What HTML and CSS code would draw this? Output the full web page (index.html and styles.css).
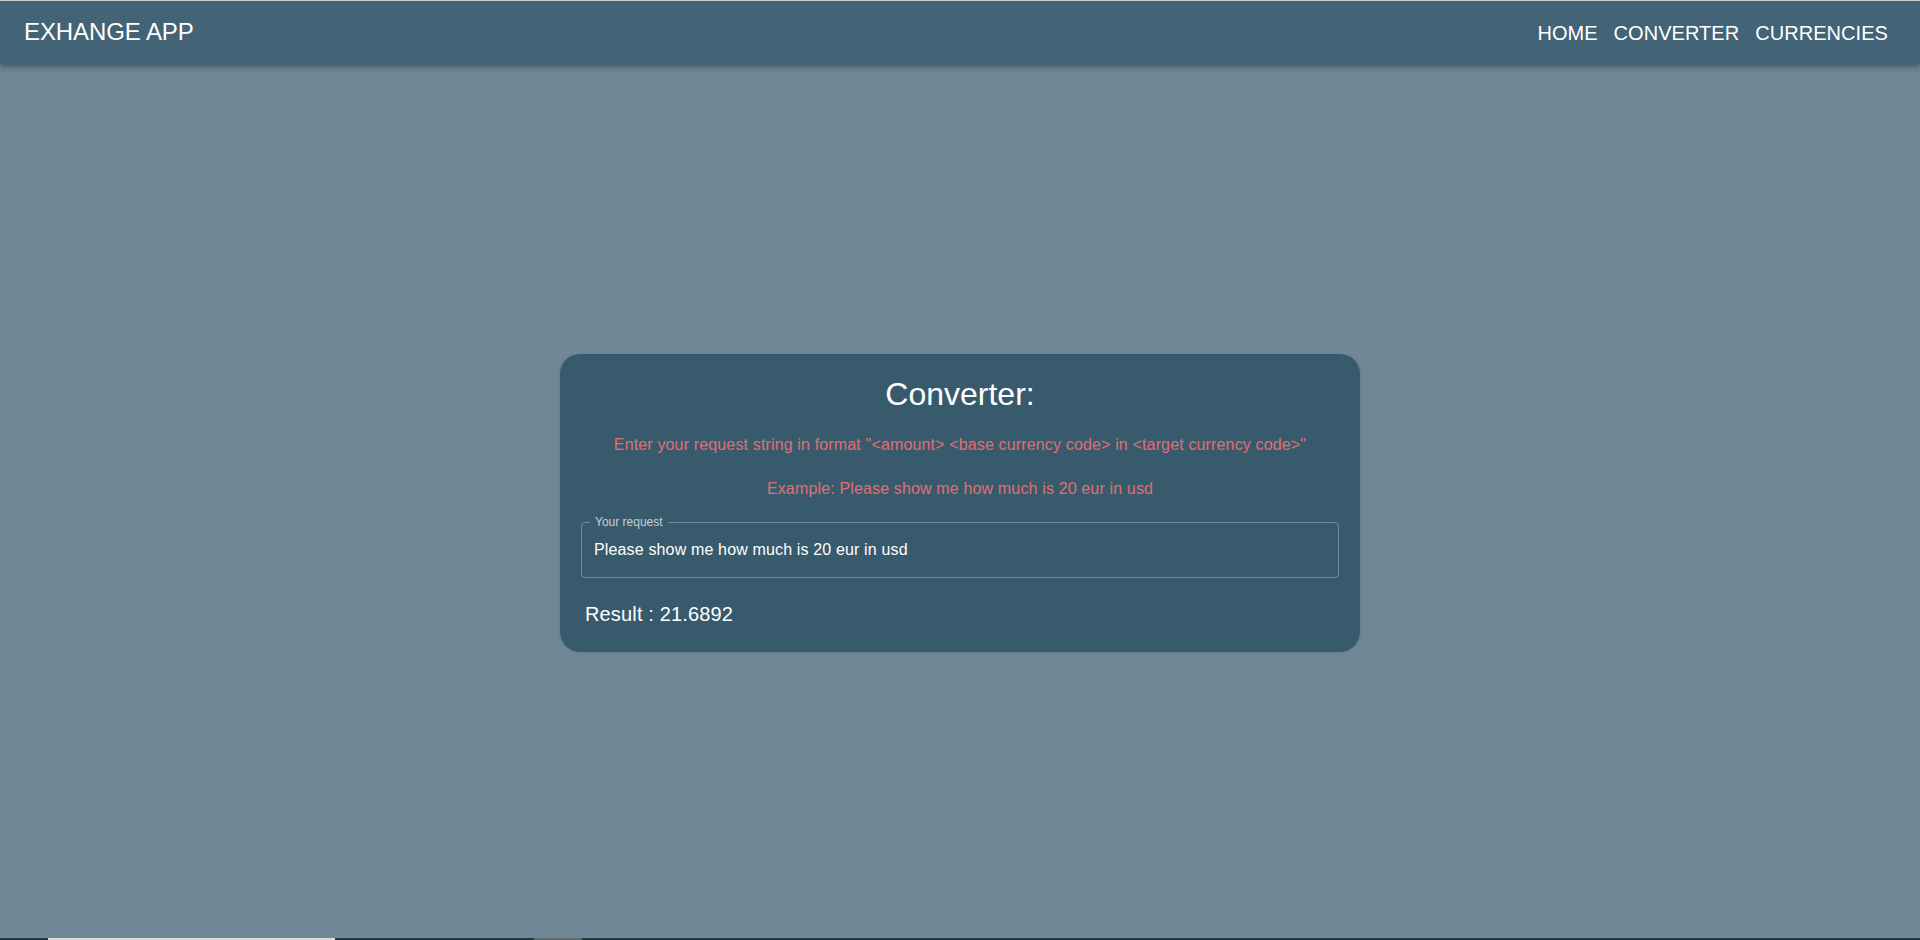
FILE: index.html
```html
<!DOCTYPE html>
<html lang="en">
<head>
<meta charset="utf-8">
<title>Exhange App</title>
<link rel="stylesheet" href="styles.css">
</head>
<body>
<div class="page">
  <header class="appbar">
    <div class="brand">EXHANGE APP</div>
    <nav class="nav">
      <a class="nav-link" href="#">HOME</a>
      <a class="nav-link" href="#">CONVERTER</a>
      <a class="nav-link" href="#">CURRENCIES</a>
    </nav>
  </header>
  <main class="main">
    <section class="card">
      <h1 class="card-title">Converter:</h1>
      <p class="hint">Enter your request string in format "&lt;amount&gt; &lt;base currency code&gt; in &lt;target currency code&gt;"</p>
      <p class="hint">Example: Please show me how much is 20 eur in usd</p>
      <div class="field">
        <label class="field-label" for="req">Your request</label>
        <input class="field-input" id="req" type="text" value="Please show me how much is 20 eur in usd">
        <fieldset class="field-outline"><legend class="field-legend"><span>Your request</span></legend></fieldset>
      </div>
      <div class="result">Result : 21.6892</div>
    </section>
  </main>
</div>
<div class="taskbar">
  <span class="taskbar-light"></span>
  <span class="taskbar-gray"></span>
</div>
</body>
</html>
```

FILE: styles.css
```css
* { box-sizing: border-box; }

html, body {
  margin: 0;
  padding: 0;
  height: 100%;
}

body {
  background: #708796;
  font-family: "Liberation Sans", Arial, sans-serif;
  color: #ffffff;
  overflow: hidden;
}

.page {
  min-height: 100vh;
  display: flex;
  flex-direction: column;
}

.appbar {
  height: 64px;
  flex: 0 0 64px;
  background: #436377;
  display: flex;
  align-items: center;
  justify-content: space-between;
  padding: 0 32px 0 24px;
  box-shadow: inset 0 1px 0 #c9cdd0, 0 2px 4px -1px rgba(0,0,0,0.2), 0 4px 5px 0 rgba(0,0,0,0.14), 0 1px 10px 0 rgba(0,0,0,0.12);
  position: relative;
  z-index: 2;
}

.brand {
  font-size: 24px;
  line-height: 1;
  letter-spacing: -0.1px;
}

.nav {
  display: flex;
  gap: 16px;
  padding-top: 2px;
}

.nav-link {
  color: #ffffff;
  text-decoration: none;
  font-size: 20px;
  line-height: 1;
  letter-spacing: 0.05px;
}

.main {
  flex: 1;
  display: flex;
  align-items: center;
  justify-content: center;
}

.card {
  width: 800px;
  background: #385a6d;
  border-radius: 20px;
  padding: 22px 21px 21px 21px;
  box-shadow: 0 2px 1px -1px rgba(0,0,0,0.2), 0 1px 1px 0 rgba(0,0,0,0.14), 0 1px 3px 0 rgba(0,0,0,0.12);
  display: flex;
  flex-direction: column;
}

.card-title {
  margin: 0;
  font-size: 32px;
  line-height: 37px;
  font-weight: 400;
  text-align: center;
}

.hint {
  margin: 20px 0 0 0;
  font-size: 16px;
  line-height: 24px;
  letter-spacing: 0.15px;
  color: #e26e70;
  text-align: center;
}

.field {
  position: relative;
  margin-top: 21px;
  height: 56px;
}

.field-input {
  position: relative;
  z-index: 1;
  display: block;
  width: 100%;
  height: 56px;
  padding: 16.5px 14px 16.5px 13px;
  border: 0;
  background: transparent;
  color: #ffffff;
  font-family: "Liberation Sans", Arial, sans-serif;
  font-size: 16px;
  line-height: 23px;
  letter-spacing: 0.15px;
  outline: none;
}

.field-label {
  position: absolute;
  left: 14px;
  top: -7px;
  font-size: 12px;
  line-height: 14px;
  color: rgba(255,255,255,0.72);
  z-index: 2;
}

.field-outline {
  position: absolute;
  inset: -5px 0 0 0;
  margin: 0;
  padding: 0 8px;
  border: 1px solid rgba(255,255,255,0.3);
  border-radius: 4px;
  pointer-events: none;
}

.field-legend {
  padding: 0;
  font-size: 12px;
  line-height: 11px;
  height: 11px;
  visibility: hidden;
}

.field-legend span {
  padding: 0 5px;
}

.result {
  margin-top: 20px;
  padding-left: 4px;
  font-size: 20px;
  line-height: 32px;
  letter-spacing: 0.15px;
}

.taskbar {
  position: fixed;
  left: 0;
  right: 0;
  bottom: 0;
  height: 2px;
  background: #1f3943;
  z-index: 5;
}

.taskbar-light {
  position: absolute;
  left: 48px;
  width: 287px;
  top: 0;
  bottom: 0;
  background: #d8dadb;
}

.taskbar-gray {
  position: absolute;
  left: 534px;
  width: 48px;
  top: 0;
  bottom: 0;
  background: #5c6b70;
}
```
